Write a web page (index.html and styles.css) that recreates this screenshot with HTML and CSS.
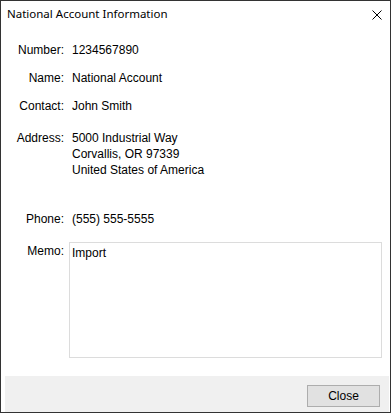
FILE: index.html
```html
<!DOCTYPE html>
<html lang="en">
<head>
  <meta charset="UTF-8" />
  <meta name="viewport" content="width=device-width, initial-scale=1.0" />
  <title>National Account Information</title>
  <link rel="stylesheet" href="styles.css">
</head>
<body>
  <div class="window">
    <div class="titlebar">
      <span class="title">National Account Information</span>
      <svg class="close-x" width="10" height="10" viewBox="0 0 10 10">
        <path d="M0.5 0.5 L9.5 9.5 M9.5 0.5 L0.5 9.5" stroke="#000" stroke-width="1" fill="none" />
      </svg>
    </div>

    <div class="content">
      <div class="label">Number:</div>
      <div class="value">1234567890</div>

      <div class="label">Name:</div>
      <div class="value">National Account</div>

      <div class="label">Contact:</div>
      <div class="value">John Smith</div>

      <div class="label address">Address:</div>
      <div class="value address">5000 Industrial Way<br>Corvallis, OR 97339<br>United States of America</div>

      <div class="label phone">Phone:</div>
      <div class="value phone">(555) 555-5555</div>

      <div class="label memo-label">Memo:</div>
      <div class="memo">Import</div>
    </div>

    <div class="footer">
      <button class="close-btn">Close</button>
    </div>
  </div>
</body>
</html>
```

FILE: styles.css
```css
body {
  margin: 0;
  font-family: "Liberation Sans", Arial, sans-serif;
  font-size: 12px;
  color: #000;
  background: #fff;
}
.window {
  width: 391px;
  height: 413px;
  box-sizing: border-box;
  border: 1px solid #333;
  display: flex;
  flex-direction: column;
  background: #fff;
}
.titlebar {
  height: 29px;
  display: flex;
  align-items: center;
  justify-content: space-between;
  padding: 0 8px 0 6px;
  flex-shrink: 0;
}
.title {
  font-family: "Noto Sans", sans-serif;
  font-size: 11.5px;
  margin-top: -4px;
}
.close-x {
  margin-top: -1px;
}
.content {
  flex: 1;
  display: grid;
  grid-template-columns: 63px 1fr;
  column-gap: 8px;
  row-gap: 12px;
  align-content: start;
  padding: 12px 8px 0 0;
  line-height: 16px;
}
.label {
  text-align: right;
}
.address {
  margin-top: 4px;
}
.phone {
  margin-top: 21px;
}
.memo-label {
  margin-top: 4px;
}
.memo {
  margin-left: -3px;
  height: 116px;
  box-sizing: border-box;
  border: 1px solid #dcdcdc;
  padding: 2px 2px;
  margin-top: 3px;
}
.footer {
  height: 36px;
  margin: 0 1px 0 4px;
  background: #f0f0f0;
  display: flex;
  align-items: flex-start;
  justify-content: flex-end;
  padding-right: 9px;
  flex-shrink: 0;
}
.close-btn {
  width: 73px;
  height: 22px;
  border: 1px solid #adadad;
  background: #e1e1e1;
  font-family: "Liberation Sans", Arial, sans-serif;
  font-size: 12px;
  color: #000;
  padding: 0;
  margin-top: 9px;
}
```
